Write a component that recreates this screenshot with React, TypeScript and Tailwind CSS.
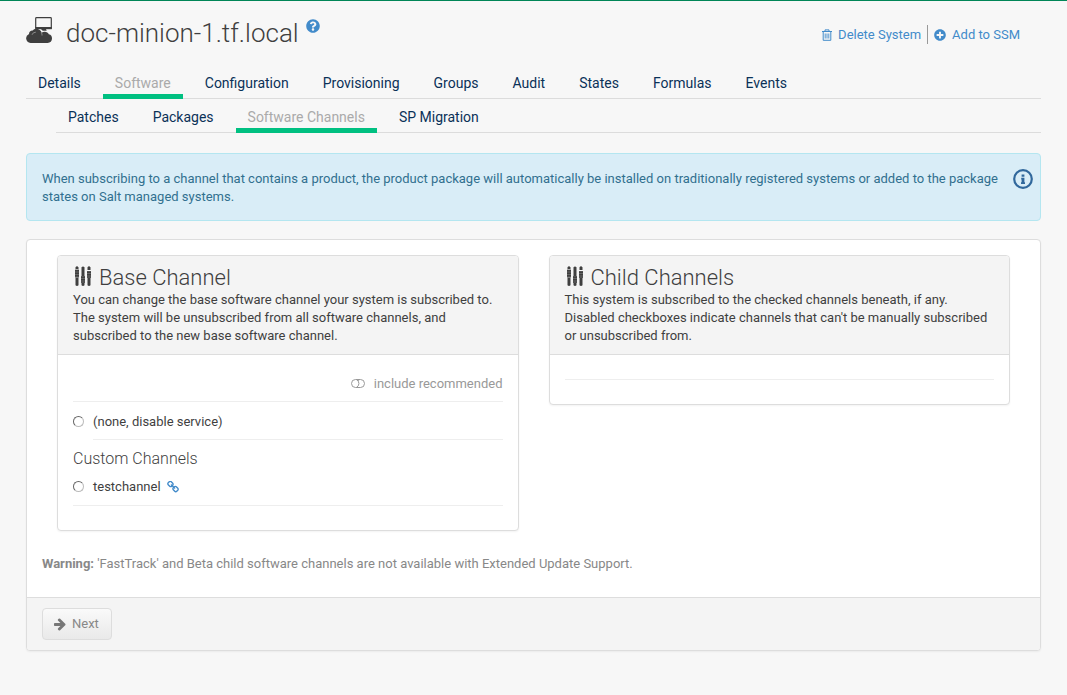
import { useState } from "react";
import type { ReactNode } from "react";
import { FaPlusCircle, FaQuestionCircle } from "react-icons/fa";

const mainTabs = ["Details", "Software", "Configuration", "Provisioning", "Groups", "Audit", "States", "Formulas", "Events"];
const subTabs = ["Patches", "Packages", "Software Channels", "SP Migration"];

function SystemIcon() {
  return (
    <svg viewBox="0 0 27 27" className="h-[27px] w-[27px] shrink-0" aria-hidden="true">
      <rect x="9.7" y="0.7" width="15.6" height="10.600" rx="0.8" fill="none" stroke="#3f3f3f" strokeWidth="1.2" />
      <path d="M9.200 10h16.700v2.200H9.200z" fill="#3f3f3f" />
      <path d="M15 12h5l.7 1.800h-4z" fill="#3f3f3f" />
      <path
        d="M4.500 26A4.700 4.700 0 0 1 3 17C3 14.400 4.800 13.200 6.800 13.400 8 11.600 11 11.200 13 12.500 14.600 13.200 15.400 14.500 15.500 15.800 18.300 13.700 22 14.800 22.800 17.300 25.200 17.600 26 19.700 26 21.600 26 24.200 24.200 26 21.600 26Z"
        fill="#3f3f3f"
      />
      <path d="M6 17.800q.8-2.600 3.800-2.600M15.300 15.500q1 1.500.7 3" stroke="#aaa" strokeWidth="0.700" fill="none" />
    </svg>
  );
}

function TrashIcon() {
  return (
    <svg viewBox="0 0 12 12" className="h-3 w-3" fill="none" stroke="currentColor" aria-hidden="true">
      <path d="M1 2.500h10M4 2.300V.9h4v1.400M2.200 2.800v8.500h7.600V2.800" strokeWidth="1" />
      <path d="M4.200 4.500v5M6 4.500v5M7.800 4.500v5" strokeWidth="0.900" />
    </svg>
  );
}

function ArrowIcon() {
  return (
    <svg viewBox="0 0 1792 1792" className="h-[14px] w-[14px]" fill="#777777" aria-hidden="true">
      <path d="M1600 960q0 54-37 91l-651 651q-39 37-91 37-51 0-90-37l-75-75q-38-38-38-91t38-91l293-293H245q-52 0-84.500-37.500T128 1024V896q0-53 32.500-90.500T245 768h704L656 474q-38-36-38-90t38-90l75-75q38-38 90-38 53 0 91 38l651 651q37 35 37 90z" />
    </svg>
  );
}

function ChainIcon() {
  return (
    <svg viewBox="64 64 1664 1664" className="h-3 w-3" fill="currentColor" aria-hidden="true">
      <path d="M1520 1216q0-40-28-68l-208-208q-28-28-68-28-42 0-72 32 3 3 19 18.500t21.500 21.500 15 19 13 25.500 3.500 27.500q0 40-28 68t-68 28q-15 0-27.500-3.500t-25.500-13-19-15-21.500-21.500-18.500-19q-33 31-33 73 0 40 28 68l206 207q27 27 68 27 40 0 68-26l147-146q28-28 28-67zm-703-705q0-40-28-68l-206-207q-28-28-68-28-39 0-68 27l-147 146q-28 28-28 67 0 40 28 68l208 208q27 27 68 27 42 0 72-31-3-3-19-18.500t-21.500-21.500-15-19-13-25.500-3.500-27.500q0-40 28-68t68-28q15 0 27.500 3.500t25.500 13 19 15 21.500 21.500 18.500 19q33-31 33-73zm895 705q0 120-85 203l-147 146q-83 83-203 83-121 0-204-85l-206-207q-83-83-83-203 0-123 88-209l-88-88q-86 88-208 88-120 0-204-84l-208-208q-84-84-84-204t85-203l147-146q83-83 203-83 121 0 204 85l206 207q83 83 83 203 0 123-88 209l88 88q86-88 208-88 120 0 204 84l208 208q84 84 84 204z" />
    </svg>
  );
}

function InfoIcon() {
  return (
    <svg viewBox="0 0 20 20" className="h-5 w-5 shrink-0" aria-hidden="true">
      <circle cx="10" cy="10" r="8.800" fill="none" stroke="#31689c" strokeWidth="2.200" />
      <path d="M8.600 5.500h2.800v2.300H8.600zM8.200 8.800h3.200v4.500h.6V15H8v-1.700h.6v-2.700H8.200z" fill="#31689c" />
    </svg>
  );
}

function ChannelsIcon() {
  return (
    <svg viewBox="0 0 18 20" className="mb-1 h-5 w-[18px] shrink-0" fill="#3f3f3f" aria-hidden="true">
      <path d="M2.500 1.200q1.500-1.800 3 0V3h-3zM2.500 11.500h3v7.700q-1.500 1.400-3 0zM8.500 1.200q1.500-1.600 3 0V10h-3zM8.500 17h3v2.200q-1.500 1.400-3 0zM14.500 1.200q1.500-1.800 3 0V4h-3zM14.500 12h3v7.200q-1.500 1.400-3 0z" />
      <path d="M2 3.500h4v8H2zM8 10h4v7H8zM14 5h4v7h-4z" fill="#666666" />
      <path d="M2 4h4v1.500H2zM2 6.500h4V8H2zM2 9h4v1.500H2zM8 10.500h4V12H8zM8 13h4v1.500H8zM8 15.500h4v1H8zM14 5.500h4V7h-4zM14 8h4v1.500h-4zM14 10.500h4v1h-4z" />
    </svg>
  );
}

function ToggleIcon() {
  return (
    <svg viewBox="0 0 14 10" className="h-[10px] w-[14px]" fill="none" stroke="currentColor" aria-hidden="true">
      <rect x="0.500" y="0.500" width="13" height="8" rx="4" />
      <path d="M5.500 .7a4.200 4.200 0 0 1 0 7.600M8.500 .7a4.200 4.200 0 0 0-1.500 1.300" />
    </svg>
  );
}

function Tabs({ label, items, active }: { label: string; items: string[]; active: string }) {
  return (
    <nav aria-label={label} className="border-b border-[#dcdcdc]">
      <ul className="-mb-px flex gap-[10px] text-sm leading-5">
        {items.map((item) => (
          <li key={item}>
            <a
              href="#"
              aria-current={item === active ? "page" : undefined}
              className={
                item === active
                  ? "block border-b-5 border-[#00c081] px-3 pt-[6px] pb-px text-[#aaaaaa]"
                  : "block border-b-5 border-transparent px-3 pt-[6px] pb-px text-[#0a3157]"
              }
            >
              {item}
            </a>
          </li>
        ))}
      </ul>
    </nav>
  );
}

function ChannelPanel({ title, description, children }: { title: string; description: string; children: ReactNode }) {
  return (
    <section className="overflow-hidden rounded border border-[#dddddd] bg-white shadow-xs">
      <header className="border-b border-[#dddddd] bg-[#f4f4f4] px-[15px] py-[9px]">
        <h2 className="flex items-center gap-2 text-[22px] leading-[26px] font-light">
          <ChannelsIcon />
          {title}
        </h2>
        <p className="leading-[18px]">{description}</p>
      </header>
      <div className="px-[15px] pb-6">{children}</div>
    </section>
  );
}

const radioClass =
  "mb-px h-[11px] w-[11px] shrink-0 appearance-none rounded-full border border-t-[#666666] border-r-[#bbbbbb] border-b-[#bbbbbb] border-l-[#666666] bg-white checked:bg-[#777777]";

export default function App() {
  const [recommended, setRecommended] = useState(false);

  return (
    <div className="min-h-screen border-t border-[#008657] bg-[#f7f7f7] px-[26px] pb-11 font-['Roboto',sans-serif] text-[13px] leading-[18px] text-[#3f3f3f]">
      <header className="flex items-start justify-between pt-4">
        <h1 className="flex items-start gap-[13px] text-[26px] leading-8 font-light">
          <SystemIcon />
          <span>doc-minion-1.tf.local</span>
          <a href="#" aria-label="Help" className="-ml-[6px] pt-[2px] text-[#428bca]">
            <FaQuestionCircle size={14} />
          </a>
        </h1>
        <div className="flex items-center pt-2 pr-[21px] text-[#428bca]">
          <a href="#" className="flex items-center gap-[5px] border-r border-[#999999] pt-px pr-[6px]">
            <TrashIcon />
            Delete System
          </a>
          <a href="#" className="flex items-center gap-[6px] pt-px pl-[6px]">
            <FaPlusCircle size={12} />
            Add to SSM
          </a>
        </div>
      </header>

      <div className="pt-[18px]">
        <Tabs label="System" items={mainTabs} active="Software" />
        <div className="pt-[2px] pl-[30px]">
          <Tabs label="Software" items={subTabs} active="Software Channels" />
        </div>
      </div>

      <div className="mt-5 flex items-start gap-3 rounded border border-[#b4e6f0] bg-[#d9edf7] pt-[15px] pr-[7px] pb-[14px] pl-[15px] text-[#31708f]">
        <p className="flex-1 pt-px">
          When subscribing to a channel that contains a product, the product package will automatically be installed on
          traditionally registered systems or added to the package states on Salt managed systems.
        </p>
        <InfoIcon />
      </div>

      <main className="mt-[18px] overflow-hidden rounded border border-[#dddddd] bg-white shadow-xs">
        <div className="px-[15px] pt-[15px] pb-6">
          <div className="grid grid-cols-2 items-start gap-[30px] px-[15px]">
            <ChannelPanel
              title="Base Channel"
              description="You can change the base software channel your system is subscribed to. The system will be unsubscribed from all software channels, and subscribed to the new base software channel."
            >
              <div className="flex justify-end border-b border-[#eeeeee] pt-5 pb-2">
                <button
                  type="button"
                  aria-pressed={recommended}
                  onClick={() => setRecommended(!recommended)}
                  className="flex items-center gap-[9px] text-[#999999]"
                >
                  <ToggleIcon />
                  include recommended
                </button>
              </div>
              <div className="flex items-center gap-[9px] pt-[11px]">
                <input type="radio" name="base" id="base-none" className={radioClass} />
                <label htmlFor="base-none">(none, disable service)</label>
              </div>
              <hr className="mt-2 ml-5 border-[#eeeeee]" />
              <h3 className="pt-[9px] text-base leading-5 font-light">Custom Channels</h3>
              <div className="flex items-center gap-[9px] border-b border-[#eeeeee] py-[9px]">
                <input type="radio" name="base" id="base-test" className={radioClass} />
                <label htmlFor="base-test">testchannel</label>
                <a href="#" aria-label="Channel details" className="-ml-[3px] text-[#428bca]">
                  <ChainIcon />
                </a>
              </div>
            </ChannelPanel>
            <ChannelPanel
              title="Child Channels"
              description="This system is subscribed to the checked channels beneath, if any. Disabled checkboxes indicate channels that can't be manually subscribed or unsubscribed from."
            >
              <hr className="mt-6 border-[#eeeeee]" />
            </ChannelPanel>
          </div>
          <p className="pt-6 text-[#888888]">
            <strong className="font-bold">Warning:</strong> 'FastTrack' and Beta child software channels are not available
            with Extended Update Support.
          </p>
        </div>
        <footer className="border-t border-[#dddddd] bg-[#f4f4f4] px-[15px] py-[10px]">
          <button
            type="button"
            className="flex items-center gap-[5px] rounded border border-[#dddddd] bg-linear-to-b from-[#fafafa] to-[#e9e9e9] py-[6px] pr-3 pl-[10px] text-[#888888]"
          >
            <ArrowIcon />
            Next
          </button>
        </footer>
      </main>
    </div>
  );
}
